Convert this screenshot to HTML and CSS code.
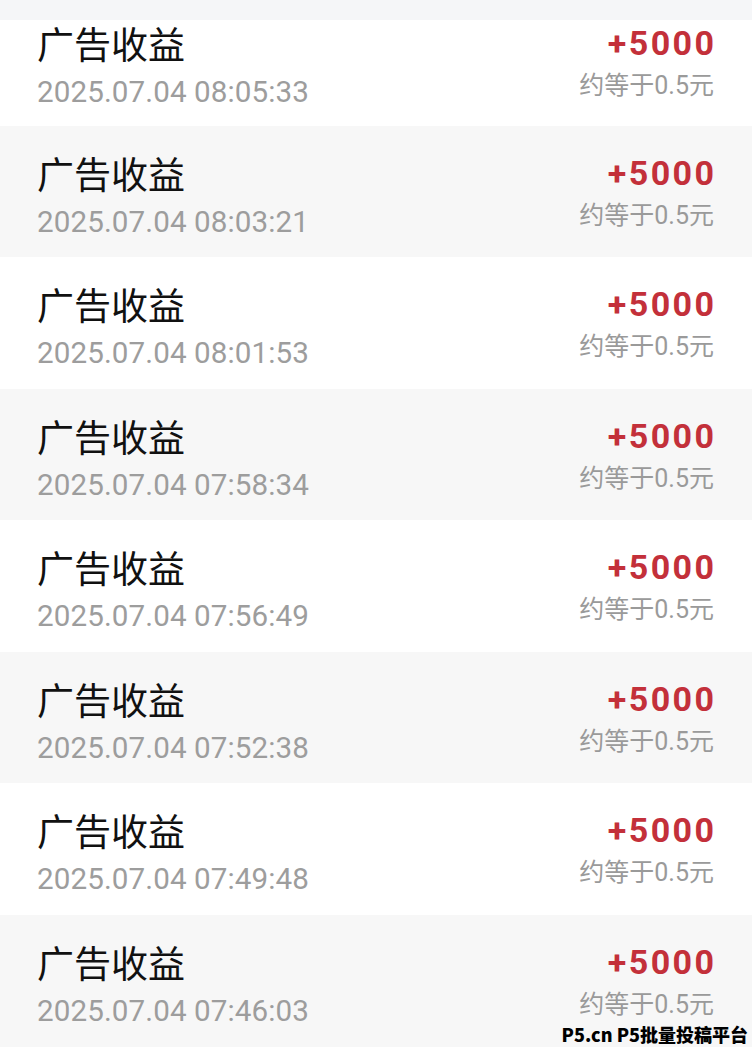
FILE: index.html
```html
<!DOCTYPE html>
<html lang="zh-CN">
<head>
<meta charset="utf-8">
<link rel="stylesheet" href="styles.css">
</head>
<body>
<div class="page">
  <div class="topbar"></div>
  <ul class="list">
    <li class="row row--cut">
      <div class="left"><div class="title">广告收益</div><div class="date">2025.07.04 08:05:33</div></div>
      <div class="right"><div class="amount">+5000</div><div class="equiv">约等于0.5元</div></div>
    </li>
    <li class="row row--alt">
      <div class="left"><div class="title">广告收益</div><div class="date">2025.07.04 08:03:21</div></div>
      <div class="right"><div class="amount">+5000</div><div class="equiv">约等于0.5元</div></div>
    </li>
    <li class="row">
      <div class="left"><div class="title">广告收益</div><div class="date">2025.07.04 08:01:53</div></div>
      <div class="right"><div class="amount">+5000</div><div class="equiv">约等于0.5元</div></div>
    </li>
    <li class="row row--alt">
      <div class="left"><div class="title">广告收益</div><div class="date">2025.07.04 07:58:34</div></div>
      <div class="right"><div class="amount">+5000</div><div class="equiv">约等于0.5元</div></div>
    </li>
    <li class="row">
      <div class="left"><div class="title">广告收益</div><div class="date">2025.07.04 07:56:49</div></div>
      <div class="right"><div class="amount">+5000</div><div class="equiv">约等于0.5元</div></div>
    </li>
    <li class="row row--alt">
      <div class="left"><div class="title">广告收益</div><div class="date">2025.07.04 07:52:38</div></div>
      <div class="right"><div class="amount">+5000</div><div class="equiv">约等于0.5元</div></div>
    </li>
    <li class="row">
      <div class="left"><div class="title">广告收益</div><div class="date">2025.07.04 07:49:48</div></div>
      <div class="right"><div class="amount">+5000</div><div class="equiv">约等于0.5元</div></div>
    </li>
    <li class="row row--alt">
      <div class="left"><div class="title">广告收益</div><div class="date">2025.07.04 07:46:03</div></div>
      <div class="right"><div class="amount">+5000</div><div class="equiv">约等于0.5元</div></div>
    </li>
  </ul>
  <div class="watermark">P5.cn P5批量投稿平台</div>
</div>
</body>
</html>
```

FILE: styles.css
```css
* { box-sizing: border-box; }
html, body {
  margin: 0;
  padding: 0;
  background: #ffffff;
}
body {
  font-family: Roboto, "Noto Sans CJK SC", sans-serif;
  overflow: hidden;
}
.page {
  position: relative;
  width: 752px;
  height: 1049px;
  overflow: hidden;
}
.topbar {
  height: 20px;
  background: #f5f6f8;
}
.list {
  list-style: none;
  margin: 0;
  padding: 0;
}
.row {
  display: flex;
  justify-content: space-between;
  align-items: flex-start;
  height: 131.6px;
  padding: 24px 38px 0 37px;
  background: #ffffff;
}
.row--cut {
  height: 105.5px;
  padding-top: 0;
}
.row--alt {
  background: #f7f7f7;
}
.left, .right {
  display: flex;
  flex-direction: column;
}
.right {
  align-items: flex-end;
}
.title {
  font-size: 37px;
  line-height: 46px;
  color: #111111;
  font-family: "Noto Sans CJK SC", sans-serif;
}
.date {
  font-size: 29.6px;
  line-height: 40px;
  color: #9d9d9d;
  margin-top: 6px;
  letter-spacing: 0.1px;
}
.amount {
  font-size: 34px;
  line-height: 46px;
  font-weight: 700;
  color: #c3303a;
  letter-spacing: 2.4px;
  margin-right: -2.4px;
}
.equiv {
  font-size: 25px;
  line-height: 34px;
  color: #9a9a9a;
  margin-top: 3px;
}
.watermark {
  position: absolute;
  right: 4px;
  bottom: 3px;
  font-family: "Noto Sans CJK SC", sans-serif;
  font-weight: 900;
  font-size: 18px;
  line-height: 24px;
  color: #000000;
}
```
